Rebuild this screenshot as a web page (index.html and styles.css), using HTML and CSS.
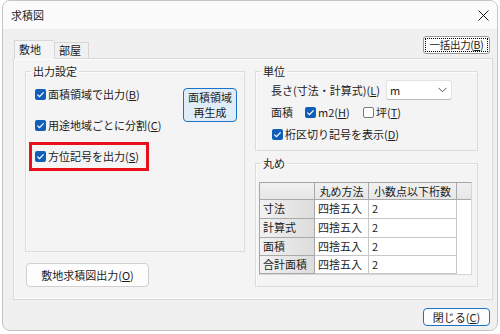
FILE: index.html
```html
<!DOCTYPE html>
<html lang="ja">
<head>
<meta charset="utf-8">
<title>求積図</title>
<link rel="stylesheet" href="styles.css">
</head>
<body>
<div class="window">
  <div class="titlebar">
    <span class="title">求積図</span>
    <svg class="close" width="11" height="11" viewBox="0 0 11 11"><path d="M0.5 0.5L10.5 10.5M10.5 0.5L0.5 10.5" stroke="#1a1a1a" stroke-width="1" fill="none"/></svg>
  </div>
  <div class="client">
    <div class="tabrow">
      <div class="tabs">
        <div class="tab active">敷地</div>
        <div class="tab">部屋</div>
      </div>
      <button class="btn btn-all"><span class="focusring">一括出力(<u>B</u>)</span></button>
    </div>
    <div class="panel">
      <div class="col col-left">
        <fieldset class="group g-output">
          <legend>出力設定</legend>
          <div class="out-body">
            <div class="checks">
              <label class="cb"><span class="box on"><svg width="11" height="11" viewBox="0 0 11 11"><path d="M2.4 5.6L4.5 7.6L8.6 3.4" stroke="#fff" stroke-width="1.3" fill="none"/></svg></span>面積領域で出力(<u>B</u>)</label>
              <label class="cb cb-2"><span class="box on"><svg width="11" height="11" viewBox="0 0 11 11"><path d="M2.4 5.6L4.5 7.6L8.6 3.4" stroke="#fff" stroke-width="1.3" fill="none"/></svg></span>用途地域ごとに分割(<u>C</u>)</label>
              <div class="redbox">
                <label class="cb"><span class="box on"><svg width="11" height="11" viewBox="0 0 11 11"><path d="M2.4 5.6L4.5 7.6L8.6 3.4" stroke="#fff" stroke-width="1.3" fill="none"/></svg></span>方位記号を出力(<u>S</u>)</label>
              </div>
            </div>
            <button class="btn btn-regen"><span class="ln">面積領域</span><span class="ln">再生成</span></button>
          </div>
        </fieldset>
        <button class="btn btn-site">敷地求積図出力(<u>O</u>)</button>
      </div>
      <div class="col col-right">
        <fieldset class="group g-unit">
          <legend>単位</legend>
          <div class="unit-body">
            <div class="row row-len">
              <span class="len-label">長さ(寸法・計算式)(<u>L</u>)</span>
              <div class="select"><span>m</span><svg width="9" height="6" viewBox="0 0 9 6"><path d="M0.5 0.8L4.5 4.8L8.5 0.8" stroke="#555" stroke-width="1" fill="none"/></svg></div>
            </div>
            <div class="row row-area">
              <span class="area-label">面積</span>
              <label class="cb cb-m2"><span class="box on"><svg width="11" height="11" viewBox="0 0 11 11"><path d="M2.4 5.6L4.5 7.6L8.6 3.4" stroke="#fff" stroke-width="1.3" fill="none"/></svg></span>m2(<u>H</u>)</label>
              <label class="cb"><span class="box off"></span>坪(<u>T</u>)</label>
            </div>
            <div class="row row-sep">
              <label class="cb"><span class="box on"><svg width="11" height="11" viewBox="0 0 11 11"><path d="M2.4 5.6L4.5 7.6L8.6 3.4" stroke="#fff" stroke-width="1.3" fill="none"/></svg></span>桁区切り記号を表示(<u>D</u>)</label>
            </div>
          </div>
        </fieldset>
        <fieldset class="group g-round">
          <legend>丸め</legend>
          <div class="grid-wrap">
            <div class="grid">
              <div class="hc corner"></div>
              <div class="hc">丸め方法</div>
              <div class="hc">小数点以下桁数</div>
              <div class="hc filler"></div>

              <div class="rh">寸法</div>
              <div class="dc">四捨五入</div>
              <div class="dc">2</div>
              <div class="blank"></div>

              <div class="rh">計算式</div>
              <div class="dc">四捨五入</div>
              <div class="dc">2</div>
              <div class="blank"></div>

              <div class="rh">面積</div>
              <div class="dc">四捨五入</div>
              <div class="dc">2</div>
              <div class="blank"></div>

              <div class="rh">合計面積</div>
              <div class="dc">四捨五入</div>
              <div class="dc">2</div>
              <div class="blank"></div>
            </div>
          </div>
        </fieldset>
      </div>
    </div>
    <div class="footer">
      <button class="btn btn-close">閉じる(<u>C</u>)</button>
    </div>
  </div>
</div>
</body>
</html>
```
FILE: styles.css
```css
* { box-sizing: border-box; }
html, body { margin: 0; padding: 0; background: #ffffff; }
body {
  width: 500px;
  height: 334px;
  overflow: hidden;
  font-family: "Noto Sans CJK JP", "Noto Sans", sans-serif;
  font-size: 11px;
  line-height: 15px;
  color: #1b1b1b;
}
u { text-decoration: underline; text-underline-offset: 1px; }

.window {
  margin-left: 2px;
  width: 496px;
  height: 331px;
  border: 1px solid #c4c4c4;
  border-radius: 8px;
  background: #f0f0f0;
  overflow: hidden;
  display: flex;
  flex-direction: column;
}
.titlebar {
  flex: none;
  height: 28px;
  background: #fbfbfb;
  display: flex;
  align-items: center;
  justify-content: space-between;
  padding: 0 8px 0 8px;
}
.title { font-size: 11px; }

.client {
  flex: 1;
  display: flex;
  flex-direction: column;
  padding: 7px 4px 0 10px;
}

.tabrow {
  height: 22px;
  display: flex;
  justify-content: space-between;
}
.tabs {
  display: flex;
  align-items: flex-end;
  margin-left: 1px;
}
.tab {
  height: 16px;
  width: 35px;
  padding-left: 4px;
  border: 1px solid #d6d6d6;
  border-bottom: none;
  background: #f0f0f0;
  line-height: 14px;
}
.tab.active {
  position: relative;
  z-index: 1;
  height: 19px;
  width: 40px;
  margin-bottom: -1px;
  background: #f4f4f4;
  line-height: 16px;
  border-right: none;
}

.btn {
  font-family: inherit;
  font-size: 11px;
  line-height: 15px;
  color: #1b1b1b;
  background: #fdfdfd;
  border: 1px solid #d0d0d0;
  border-radius: 4px;
  padding: 0;
  text-align: center;
}
.btn-all {
  width: 67px;
  height: 18px;
  margin-right: 3px;
  border-color: #9a9a9a;
  border-radius: 3px;
  padding: 1px;
}
.focusring {
  display: flex;
  align-items: center;
  justify-content: center;
  height: 14px;
  border: 1px dotted #000;
  font-size: 10.5px;
  line-height: 12px;
  letter-spacing: -0.3px;
  white-space: nowrap;
}

.panel {
  height: 242px;
  border: 1px solid #d9d9d9;
  background: #f4f4f4;
  box-shadow: inset 0 0 0 1px #fbfbfb;
  display: flex;
  gap: 10px;
  padding: 5px 12px 0 11px;
}
.col { display: flex; flex-direction: column; }
.col-left { width: 220px; }
.col-right { width: 223px; }

.group {
  margin: 0;
  padding: 0;
  min-width: 0;
  border: 1px solid #dcdcdc;
  box-shadow: inset 1px 1px 0 #fbfbfb;
}
.group legend {
  margin-left: 5px;
  padding: 0 2px;
  line-height: 15px;
}

.g-output { height: 188px; }
.out-body {
  display: flex;
  justify-content: space-between;
  padding: 7px 7px 0 9px;
}
.checks { display: flex; flex-direction: column; }
.cb {
  display: flex;
  align-items: center;
  height: 16px;
  white-space: nowrap;
}
.box {
  flex: none;
  width: 11px;
  height: 11px;
  border-radius: 2px;
  margin-right: 2px;
  display: flex;
}
.box.on { background: #0f5fba; }
.box.off { background: #ffffff; border: 1px solid #7a7a7a; }
.cb-2 { margin-top: 15px; }
.redbox {
  margin-top: 9px;
  margin-left: -6px;
  width: 120px;
  height: 29px;
  border: 3px solid #e8111b;
  padding: 3px 3px 0 3px;
}
.btn-regen {
  width: 54px;
  height: 34px;
  margin-top: 2px;
  border: 1px solid #1a73c8;
  background: #e0edf9;
  border-radius: 4px;
  display: flex;
  flex-direction: column;
  align-items: center;
  justify-content: center;
}
.btn-regen .ln {
  display: block;
  height: 15px;
  line-height: 15px;
  white-space: nowrap;
}
.btn-site {
  margin-top: 11px;
  margin-left: 1px;
  width: 123px;
  height: 24px;
}

.g-unit { height: 87px; }
.unit-body { padding: 1px 0 0 15px; }
.row { display: flex; align-items: center; }
.row-len { height: 20px; }
.len-label { width: 115px; white-space: nowrap; }
.select {
  width: 66px;
  height: 20px;
  background: #fff;
  border: 1px solid #e2e2e2;
  border-bottom-color: #bdbdbd;
  border-radius: 3px;
  display: flex;
  align-items: center;
  justify-content: space-between;
  padding: 0 4px 0 3px;
}
.row-area { height: 16px; margin-top: 4px; }
.area-label { width: 34px; }
.cb-m2 { width: 58px; }
.row-sep { height: 16px; margin-top: 6px; margin-left: 1px; }

.g-round { height: 131px; margin-top: 5px; }
.grid-wrap {
  margin: 11px 0 0 3px;
  width: 213px;
  height: 93px;
  background: #ffffff;
  border: 1px solid #a6a6a6;
  border-right-color: #d6d6d6;
  border-bottom-color: #d6d6d6;
}
.grid {
  display: grid;
  grid-template-columns: 55px 54px 88px 14px;
  grid-template-rows: 17px 19px 19px 18px 18px;
}
.hc, .rh, .dc {
  border-right: 1px solid #a9a9a9;
  border-bottom: 1px solid #a9a9a9;
  white-space: nowrap;
  line-height: 16px;
}
.hc {
  background: linear-gradient(#f1f1f1, #e6e6e6);
  text-align: center;
}
.hc.filler { border-right: none; }
.rh {
  background: linear-gradient(90deg, #f2f2f2, #dcdcdc);
  padding-left: 3px;
  line-height: 17px;
}
.dc {
  background: #ffffff;
  padding-left: 3px;
  border-right-color: #c8c8c8;
  border-bottom-color: #c8c8c8;
  line-height: 17px;
}
.blank { background: #ffffff; }

.footer {
  display: flex;
  justify-content: flex-end;
  margin-top: 8px;
  padding-right: 3px;
}
.btn-close {
  width: 67px;
  height: 18px;
  border: 1px solid #1a73c8;
}
```
